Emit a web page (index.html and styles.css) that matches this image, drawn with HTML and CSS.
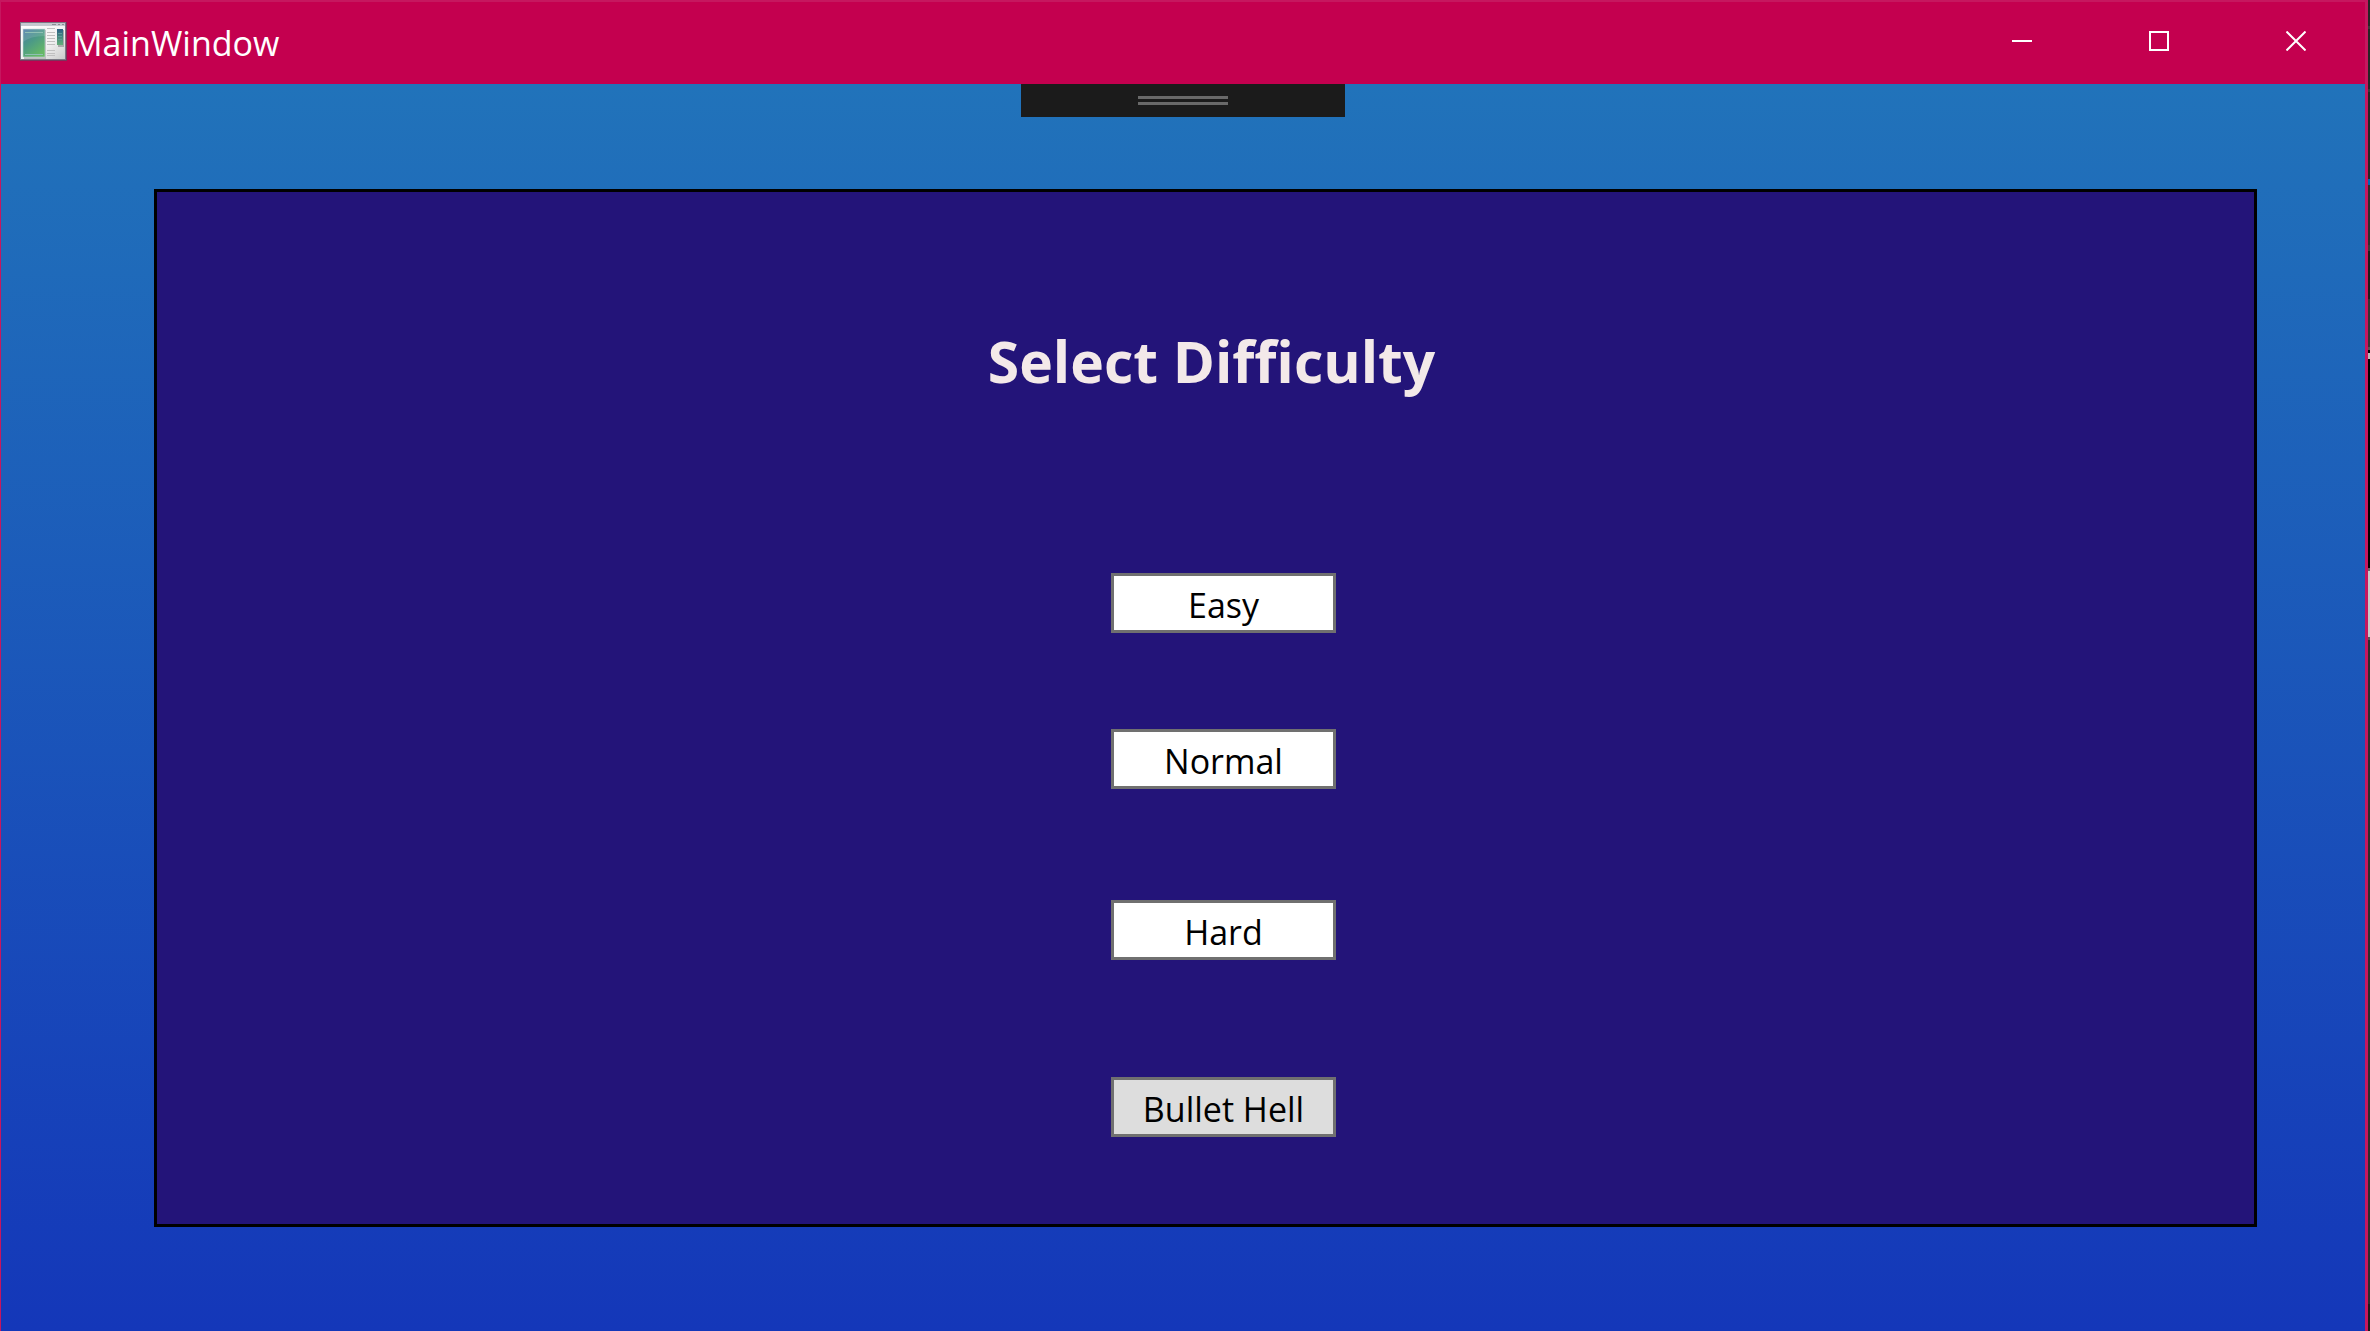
FILE: index.html
```html
<!DOCTYPE html>
<html lang="en">
<head>
<meta charset="utf-8">
<title>MainWindow</title>
<link rel="stylesheet" href="styles.css">
</head>
<body>
<div class="window">
  <header class="titlebar">
    <svg class="app-icon" viewBox="0 0 48 40" aria-hidden="true">
      <defs>
        <linearGradient id="frame" x1="0" y1="0" x2="1" y2="1"><stop offset="0" stop-color="#fff"/><stop offset=".6" stop-color="#f2f2f2"/><stop offset="1" stop-color="#c9c9c9"/></linearGradient>
        <linearGradient id="pane" x1="0" y1="0" x2=".6" y2="1"><stop offset="0" stop-color="#4a78a8"/><stop offset=".5" stop-color="#4c9a86"/><stop offset="1" stop-color="#66b866"/></linearGradient>
        <linearGradient id="side" x1="0" y1="0" x2="0" y2="1"><stop offset="0" stop-color="#2c5f86"/><stop offset="1" stop-color="#62ad78"/></linearGradient>
      </defs>
      <rect x="1" y="1" width="47" height="39" fill="#5d4a62" opacity=".7"/>
      <rect x="1.500" y="1.500" width="45" height="37" fill="url(#frame)" stroke="#7b7884"/>
      <rect x="2" y="2" width="44" height="3" fill="#c5c8cf"/>
      <path d="M33 3.500h4M39 3.500h2M43 3.500h2" stroke="#8c8c94"/>
      <g transform="translate(1 1)">
        <rect x="4" y="8" width="22" height="29" fill="#bdbdbd"/>
        <rect x="3" y="7" width="22" height="28" fill="url(#pane)" stroke="#c6d6d6" stroke-width=".6"/>
        <path d="M3 20Q10 14 25 14V7H3z" fill="#fff" opacity=".12"/>
        <path d="M5 10.500h18M5 32.500h18" stroke="#8fc0b4"/>
        <path d="M27 6.500h8M27 10.500h8M27 13.500h8M27 16.500h8M27 19.500h8M27 22.500h8M27 28.500h8M27 31.500h8M27 33.500h8" stroke="#c0c0c0"/>
        <rect x="38" y="8" width="6" height="17" fill="#aaa"/>
        <rect x="37" y="7" width="6" height="16" fill="url(#side)"/>
        <path d="M38 11.500h4M38 14.500h4M38 17.500h4" stroke="#5d9c98"/>
      </g>
    </svg>
    <span class="title">MainWindow</span>
    <div class="caption">
      <button type="button" class="caption-btn" aria-label="Minimize"><svg class="glyph" viewBox="0 0 20 20"><path d="M0 10h20" shape-rendering="crispEdges"/></svg></button>
      <button type="button" class="caption-btn" aria-label="Maximize"><svg class="glyph" viewBox="0 0 20 20"><path d="M1 1h18v18H1z" shape-rendering="crispEdges"/></svg></button>
      <button type="button" class="caption-btn" aria-label="Close"><svg class="glyph" viewBox="0 0 20 20"><path d="M.5.5l19 19M19.500.5l-19 19"/></svg></button>
    </div>
  </header>
  <main class="client">
    <div class="grip"><span class="grip-line"></span><span class="grip-line"></span></div>
    <section class="panel">
      <h1 class="heading">Select Difficulty</h1>
      <div class="choices">
        <button type="button" class="choice choice-easy">Easy</button>
        <button type="button" class="choice choice-normal">Normal</button>
        <button type="button" class="choice choice-hard">Hard</button>
        <button type="button" class="choice choice-bullet">Bullet Hell</button>
      </div>
    </section>
  </main>
</div>
<div class="desktop-edge"></div>
</body>
</html>
```
FILE: styles.css
```css
* { box-sizing: border-box; }

body {
  display: flex;
  min-height: 100vh;
  margin: 0;
  font-family: "Segoe UI", "Open Sans", "Noto Sans", sans-serif;
  background: #252525;
}

.window {
  display: flex;
  flex: 1;
  flex-direction: column;
  border: solid #c6175f;
  border-width: 2px 3px 0 1px;
}

.titlebar {
  display: flex;
  align-items: center;
  height: 82px;
  padding: 0 1px 0 18px;
  color: #fff;
  background: #c4004f;
}

.app-icon { width: 48px; height: 40px; margin-bottom: 4px; }
.title { margin-left: 5px; font-size: 34px; line-height: 48px; }
.caption { display: flex; align-self: stretch; margin-left: auto; }

.caption-btn {
  display: flex;
  align-items: center;
  justify-content: center;
  width: 137px;
  padding: 0 0 4px;
  border: 0;
  background: none;
}

.glyph { width: 20px; height: 20px; fill: none; stroke: #fff; stroke-width: 2; }

.client {
  position: relative;
  display: flex;
  flex: 1;
  padding: 105px 108px 104px 153px;
  background: linear-gradient(#2173ba, #1437b9);
}

.grip {
  position: absolute;
  top: 0;
  left: 50%;
  display: flex;
  flex-direction: column;
  align-items: center;
  gap: 3px;
  width: 324px;
  height: 33px;
  padding-top: 12px;
  background: #1b1b1b;
  transform: translateX(-50%);
}

.grip-line { width: 90px; height: 3px; background: #696969; }

.panel {
  flex: 1;
  border: 3px solid #000;
  background: #231479;
}

.heading {
  margin: 129px 0 0;
  padding-left: 12px;
  color: #f3e9e9;
  font-size: 57px;
  font-weight: 700;
  line-height: 80px;
  text-align: center;
}

.choices {
  display: flex;
  flex-direction: column;
  align-items: center;
  margin-top: 172px;
  padding-left: 36px;
}

.choice {
  width: 225px;
  height: 60px;
  padding: 4px 0 0;
  border: 3px solid #707070;
  color: #000;
  background: #fff;
  font: 34px/48px "Segoe UI", "Open Sans", "Noto Sans", sans-serif;
}

.choice-normal { margin-top: 96px; }
.choice-hard { margin-top: 111px; }
.choice-bullet { margin-top: 117px; background: #ddd; }

.desktop-edge {
  width: 2px;
  background: linear-gradient(#252525 26px, #3a3a3a 26px 29px, #252525 29px 89px, #3a3a3a 89px 92px, #252525 92px 179px, #0066b5 179px 185px, #2d2d2d 185px 245px, #3a3a3a 245px 251px, #1b1b1b 251px 299px, #333 299px 347px, #555 347px 350px, #000 350px 353px, #bbb 353px 359px, #000 359px 568px, #666 568px 571px, #c8c8c8 571px 637px, #555 637px 640px, #2d2d2d 640px 1304px, #1b1b1b 1304px);
}
```
